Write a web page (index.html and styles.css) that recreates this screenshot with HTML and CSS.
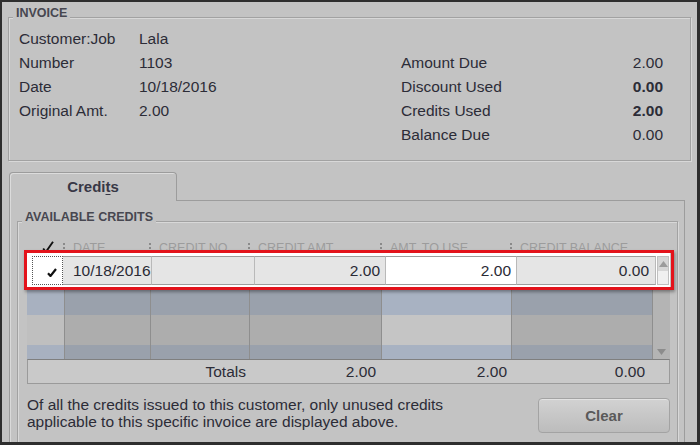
FILE: index.html
```html
<!DOCTYPE html>
<html>
<head>
<meta charset="utf-8">
<title>Credits</title>
<link rel="stylesheet" href="styles.css">
</head>
<body>
<div class="frame">
  <section class="group invoice">
    <div class="group-title">INVOICE</div>
    <div class="inv-body">
      <div class="inv-left">
        <span>Customer:Job</span><span>Lala</span>
        <span>Number</span><span>1103</span>
        <span>Date</span><span>10/18/2016</span>
        <span>Original Amt.</span><span>2.00</span>
      </div>
      <div class="inv-right">
        <span>Amount Due</span><span class="num">2.00</span>
        <span>Discount Used</span><span class="num b">0.00</span>
        <span>Credits Used</span><span class="num b">2.00</span>
        <span>Balance Due</span><span class="num">0.00</span>
      </div>
    </div>
  </section>

  <div class="tabs">
    <div class="tabstrip">
      <div class="tab">Credi<u>t</u>s</div>
      <div class="tab-fill"></div>
    </div>
    <div class="panel">
      <section class="group credits">
        <div class="group-title">AVAILABLE CREDITS</div>
        <div class="table">
          <div class="thead">
            <div class="th th-check"><svg width="12" height="12" viewBox="0 0 12 12"><path d="M1.2 7.5 L3.8 11 L11 0.8" fill="none" stroke="#111" stroke-width="1.9"/></svg></div>
            <div class="th"><i class="sep"></i>DATE</div>
            <div class="th"><i class="sep"></i>CREDIT NO.</div>
            <div class="th"><i class="sep"></i>CREDIT AMT</div>
            <div class="th"><i class="sep"></i>AMT. TO USE</div>
            <div class="th"><i class="sep"></i>CREDIT BALANCE</div>
            <div class="th"></div>
          </div>
          <div class="tbody">
            <div class="datarow">
              <div class="td td-check"><svg width="10" height="9" viewBox="0 0 10 9"><path d="M1 5.2 L3.5 8 L9 1" fill="none" stroke="#111" stroke-width="2.2"/></svg></div>
              <div class="td date">10/18/2016</div>
              <div class="td"></div>
              <div class="td num amt">2.00</div>
              <div class="td num edit">2.00</div>
              <div class="td num bal">0.00</div>
              <div class="sb-top"><svg width="9" height="6" viewBox="0 0 9 6"><polygon points="0,6 4.5,0 9,6" fill="#9b9b9b"/></svg></div>
              <div class="hl"></div>
            </div>
            <div class="stripes">
              <div class="scol light w1"></div>
              <div class="scol dark w2"></div>
              <div class="scol dark w3"></div>
              <div class="scol dark w4"></div>
              <div class="scol edit w5"></div>
              <div class="scol dark w6"></div>
              <div class="sb-bottom"><svg width="9" height="6" viewBox="0 0 9 6"><polygon points="0,0 9,0 4.5,6" fill="#8c8c8c"/></svg></div>
            </div>
          </div>
          <div class="totals">
            <span class="tot-label">Totals</span>
            <span class="tcell t4">2.00</span>
            <span class="tcell t5">2.00</span>
            <span class="tcell t6">0.00</span>
            <span></span>
          </div>
        </div>
        <div class="foot">
          <p class="note">Of all the credits issued to this customer, only unused credits<br>applicable to this specific invoice are displayed above.</p>
          <button class="btn" type="button">Clear</button>
        </div>
      </section>
    </div>
  </div>
</div>
</body>
</html>
```

FILE: styles.css
```css
html, body {
  margin: 0;
  padding: 0;
}

body {
  font-family: "Liberation Sans", Arial, sans-serif;
  background: #c3c3c3;
}

.frame {
  width: 700px;
  height: 445px;
  box-sizing: border-box;
  border: 2px solid #2e2e2e;
  border-right-width: 3px;
  border-bottom-width: 3px;
  background: #c3c3c3;
  display: flex;
  flex-direction: column;
  overflow: hidden;
  color: #2c2c37;
}

.group {
  box-sizing: border-box;
  border: 1px solid #a2a2a2;
  box-shadow: inset 1px 1px 0 #d8d8d8, 1px 1px 0 #d8d8d8;
}

.group-title {
  width: max-content;
  margin-top: -11px;
  padding: 0 3px;
  background: #c3c3c3;
  font-size: 12.5px;
  font-weight: bold;
  line-height: 13px;
  color: #474750;
}

/* Invoice box */
.invoice {
  flex: none;
  height: 144px;
  margin: 15px 6px 0 6px;
  padding: 0 27px 0 10px;
}

.invoice .group-title {
  margin-left: -6px;
}

.inv-body {
  display: flex;
  justify-content: space-between;
  align-items: flex-start;
  margin-top: 7px;
  font-size: 15.5px;
  line-height: 24px;
}

.inv-left {
  display: grid;
  grid-template-columns: 120px auto;
  grid-auto-rows: 24px;
}

.inv-right {
  display: grid;
  grid-template-columns: 1fr auto;
  grid-auto-rows: 24px;
  width: 262px;
  margin-top: 24px;
}

.num {
  text-align: right;
}

.b {
  font-weight: bold;
}

/* Tabs */
.tabs {
  flex: 1;
  min-height: 0;
  display: flex;
  flex-direction: column;
  margin: 11px 12px 0 7px;
}

.tabstrip {
  flex: none;
  display: flex;
  height: 29px;
}

.tab {
  width: 168px;
  box-sizing: border-box;
  border: 1px solid #9c9c9c;
  border-bottom: none;
  border-radius: 4px 4px 0 0;
  box-shadow: inset 1px 1px 0 #dcdcdc;
  font-size: 15px;
  font-weight: bold;
  line-height: 28px;
  text-align: center;
  color: #383846;
}

.tab u {
  text-underline-offset: 2px;
}

.tab-fill {
  flex: 1;
  border-bottom: 1px solid #9c9c9c;
}

.panel {
  flex: 1;
  min-height: 0;
  display: flex;
  flex-direction: column;
  border-left: 1px solid #9c9c9c;
  border-right: 1px solid #9c9c9c;
  box-shadow: inset 1px 0 0 #dadada;
}

.credits {
  flex: 1;
  margin: 20px 6px 0 7px;
  padding: 0 7px 0 9px;
  border-bottom: none;
}

.credits .group-title {
  margin-left: -5px;
}

/* Table */
.table {
  width: 643px;
  margin-top: 12px;
}

.thead {
  display: grid;
  grid-template-columns: 38px 86px 99px 132px 130px 141px 17px;
  height: 17px;
}

.th {
  display: flex;
  align-items: center;
  padding-top: 5px;
  font-size: 12.5px;
  color: #9c9c9c;
  white-space: nowrap;
}

.th-check {
  padding-left: 15px;
  padding-top: 2px;
}

.th-check svg {
  display: block;
}

.sep {
  width: 0;
  height: 10px;
  border-left: 2px dotted #8a8a8a;
  margin-left: -2px;
  margin-right: 8px;
}

.datarow {
  position: relative;
  display: grid;
  grid-template-columns: 31px 89px 103px 131px 131px 139px 13px;
  height: 34px;
  box-sizing: border-box;
  padding: 3px 1px 2px 5px;
  background: #ffffff;
}

.td {
  border-top: 1px solid #9d9d9d;
  border-bottom: 1px solid #9d9d9d;
  border-right: 1px solid #b9b9b9;
  background: #e5e5e5;
  font-size: 15.5px;
  line-height: 27px;
  padding: 0 5px;
  white-space: nowrap;
  color: #2a2a35;
}

.td.date {
  padding-left: 10px;
}

.td.edit {
  background: #ffffff;
}

.td.bal {
  padding-right: 6px;
}

.td-check {
  border: 1px dotted #555555;
  background: #ffffff;
  padding: 0;
}

.td-check svg {
  display: block;
  margin: 11px 0 0 14px;
}

.sb-top {
  margin-left: 1px;
  border: 1px solid #c0c0c0;
  background: linear-gradient(#d6d6d6 0 14px, #f0f0f0 14px);
  display: flex;
  justify-content: center;
  align-items: flex-start;
  padding-top: 4px;
  box-sizing: border-box;
}

.sb-top svg {
  display: block;
}

.hl {
  position: absolute;
  top: -3px;
  left: -3px;
  right: -4px;
  bottom: -3px;
  border: 3px solid #e3131b;
  box-shadow: 1px 2px 3px rgba(0, 0, 0, 0.35);
  pointer-events: none;
}

.stripes {
  display: flex;
  height: 72px;
}

.scol {
  box-sizing: border-box;
  border-right: 1px solid #8e8e8e;
}

.w1 { width: 38px; }
.w2 { width: 86px; }
.w3 { width: 99px; }
.w4 { width: 132px; }
.w5 { width: 130px; }
.w6 { width: 141px; }

.scol.light {
  background: linear-gradient(#a8b1c0 0 28px, #bfbfbf 28px 58px, #a8b1c0 58px);
}

.scol.dark {
  background: linear-gradient(#9aa1ac 0 28px, #adadad 28px 58px, #9aa1ac 58px);
}

.scol.edit {
  background: linear-gradient(#a8b2c2 0 28px, #c5c5c5 28px 58px, #a8b2c2 58px);
}

.sb-bottom {
  width: 17px;
  box-sizing: border-box;
  background: #b4b4b4;
  display: flex;
  align-items: flex-end;
  padding: 0 0 4px 4px;
}

.sb-bottom svg {
  display: block;
}

.totals {
  display: grid;
  grid-template-columns: 38px 86px 99px 132px 130px 141px 15px;
  border: 1px solid #9a9a9a;
  border-top-color: #7f7f7f;
  background: #c9c9c9;
  font-size: 15.5px;
  line-height: 23px;
}

.tot-label {
  grid-column: 1 / 4;
  text-align: right;
  padding-right: 5px;
}

.tcell {
  text-align: right;
}

.t4 { padding-right: 7px; }
.t5 { padding-right: 6px; }
.t6 { padding-right: 9px; }

/* Footer */
.foot {
  display: flex;
  justify-content: space-between;
  align-items: flex-start;
  margin-top: 12px;
}

.note {
  margin: 0;
  font-size: 15.5px;
  line-height: 17px;
  color: #2c2c37;
}

.btn {
  width: 132px;
  height: 35px;
  margin-top: 2px;
  padding: 0;
  border: 1px solid #a3a3a3;
  border-radius: 4px;
  background: linear-gradient(#d2d2d2, #bcbcbc);
  box-shadow: inset 0 1px 0 #e2e2e2;
  font-family: "Liberation Sans", Arial, sans-serif;
  font-size: 15px;
  font-weight: bold;
  color: #5a5a5a;
}
```
